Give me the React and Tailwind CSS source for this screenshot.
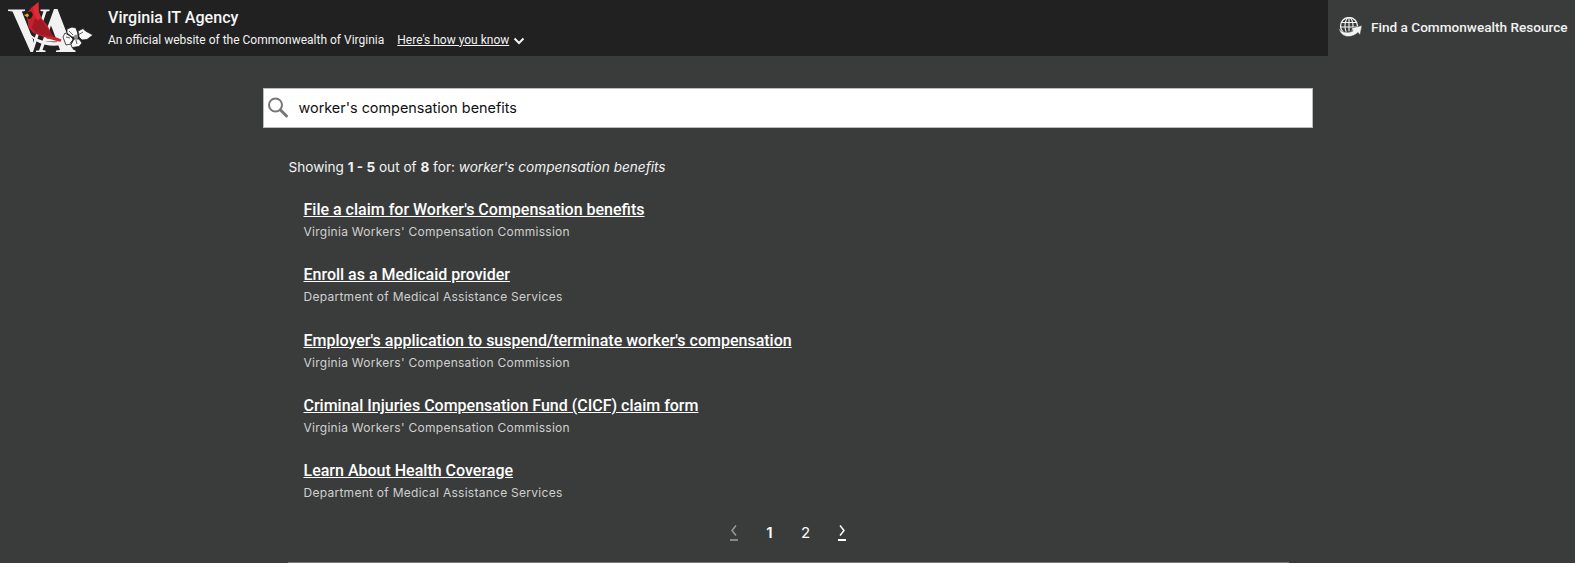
const results = [
  ["File a claim for Worker's Compensation benefits", "Virginia Workers' Compensation Commission"],
  ["Enroll as a Medicaid provider", "Department of Medical Assistance Services"],
  ["Employer's application to suspend/terminate worker's compensation", "Virginia Workers' Compensation Commission"],
  ["Criminal Injuries Compensation Fund (CICF) claim form", "Virginia Workers' Compensation Commission"],
  ["Learn About Health Coverage", "Department of Medical Assistance Services"],
];

function Logo() {
  return (
    <svg width="96" height="56" viewBox="0 0 96 56" className="shrink-0">
      {/* V */}
      <path d="M8 9.500h17v1.400l-3.200.6L33 39.500 33 52h-2.500L12.500 11.500 8 10.900z" fill="#f2f2f2" />
      <path d="M32 46 43.500 11.500l-3-.6V9.500h9v1.400l-3 .6L33 52h-2z" fill="#f2f2f2" />
      {/* A */}
      <path d="M39 50.500 54 9h3.500L73 49.500l2.500 1V52H56v-1.500l4-.5-3-8.500H45.500l-3 8.500 3 .5V52H36v-1.500z" fill="#f2f2f2" />
      <path d="M46.500 38.500h9.500l-5-13z" fill="#212121" />
      {/* cardinal */}
      <path d="M38.500 2 31.500 7.500 28 12l-2 2.500 1.500 5.500 1 7.500 5 5.500 9 3.500 9 3 9 2.500 1-2.500-9-3.500-5-10.500-7-8.500-3-5z" fill="#c9202d" />
      <path d="M38 15l-4 6-2 7 4 5 10 3 8 1-6-8z" fill="#9f1a25" />
      <path d="M38.500 2 33 7l1 8 4 6 3-4-2-5z" fill="#dd2a35" />
      <path d="M27 12.500l4-1 2 3-2 4-3 .5z" fill="#1b1b1b" />
      <path d="M24 15l4-1.500 1 2.500-2 1z" fill="#e7a92b" />
      {/* swoosh */}
      <path d="M28 32c8 9 22 12 38 9l2 2.500C50 49 34 44 28 32z" fill="#f2f2f2" />
      {/* dogwood */}
      <g fill="#f8f8f8" stroke="#1d1d1d" strokeWidth="0.8" strokeLinejoin="round">
        <path d="M67 29l5-2 4 1 2 6-1 3-5 0-5-4z" />
        <path d="M78 31l5-2.500 2.500 2.500 7.500 4-6 4.500-5 .5-3-3z" />
        <path d="M74 39l5 0 3 4-3 3.500-7 1-1-3z" />
        <path d="M65 33l5 3 3 3-2 5-5 1-1.500-4-1.500-4z" />
      </g>
      <path d="M69 31l4 4M83 32l-5 3M70 43l3-3M77 44l-1-4M66 37l4 1" stroke="#1d1d1d" strokeWidth="0.7" />
      <circle cx="76" cy="37" r="2.200" fill="#8a8a8a" />
    </svg>
  );
}

function Globe() {
  return (
    <svg width="24" height="21" viewBox="0 0 24 21" className="shrink-0">
      <circle cx="11" cy="9" r="8.500" fill="none" stroke="#f2f2f2" strokeWidth="1.300" />
      <ellipse cx="11" cy="9" rx="4" ry="8.500" fill="none" stroke="#f2f2f2" strokeWidth="1.100" />
      <path d="M3 5.500h16M2.500 10h17M11 .5v14" stroke="#f2f2f2" strokeWidth="1.100" />
      <path d="M.5 11c3 4.500 9 5.500 14.500 3l-1.500-3L24 8.500 22 18l-2-2.500C13 22 3 21 .5 11z" fill="#f2f2f2" stroke="#3a3c3b" strokeWidth="0.500" />
    </svg>
  );
}

function Chevron({ left, color }) {
  return (
    <svg width="8" height="11" viewBox="0 0 8 11">
      <path d={left ? "M6 .5 2 5.500l4 5" : "M2 .5l4 5-4 5"} fill="none" stroke={color} strokeWidth="1.500" />
    </svg>
  );
}

export default function App() {
  return (
    <div className="h-[563px] overflow-hidden bg-[#3a3c3b] text-white font-['Inter',sans-serif]">
      <header className="flex h-14 bg-[#212121] font-['Roboto',sans-serif]">
        <div className="flex flex-1 items-center">
          <Logo />
          <div className="ml-3">
            <div className="pt-[1px] text-[16.1px] font-medium leading-5 text-[#f5f5f5]">Virginia IT Agency</div>
            <div className="mt-[2px] flex items-center text-xs leading-5 text-[#f2f2f2]">
              <span>An official website of the Commonwealth of Virginia</span>
              <a className="ml-[13px] underline">Here's how you know</a>
              <svg width="12" height="12" viewBox="0 0 12 12" className="ml-[4px] mt-[2px]">
                <path d="M1.500 3.500 6 8l4.500-4.500" fill="none" stroke="#f2f2f2" strokeWidth="2" />
              </svg>
            </div>
          </div>
        </div>
        <div className="flex w-[247px] items-center bg-[#3a3c3b] pb-[2px] pl-[10px]">
          <Globe />
          <span className="ml-[9px] whitespace-nowrap text-[13.6px] font-medium text-[#f2f2f2]">Find a Commonwealth Resource</span>
        </div>
      </header>
      <main className="mx-auto w-[1050px]">
        <div className="mt-8 flex h-10 items-center border border-[#bbb] bg-white pl-1">
          <svg width="24" height="24" viewBox="0 0 24 24" className="shrink-0">
            <circle cx="7.500" cy="9" r="6.500" fill="none" stroke="#777" strokeWidth="2" />
            <path d="M12.500 14 18.500 20" stroke="#777" strokeWidth="3" strokeLinecap="round" />
          </svg>
          <span className="ml-[7px] text-[14.4px] text-[#111]">worker's compensation benefits</span>
        </div>
        <p className="ml-[26px] mt-[29px] text-[13.6px] leading-5 text-[#f2f2f2]">
          Showing <b className="font-bold">1 - 5</b> out of <b className="font-bold">8</b> for: <i>worker's compensation benefits</i>
        </p>
        <ul className="ml-[41px] mt-[21px] font-['Roboto',sans-serif]">
          {results.map(([title, agency]) => (
            <li key={title} className="h-[65.25px]">
              <a className="block text-base font-medium leading-6 text-white underline">{title}</a>
              <div className="mt-[1px] font-['Inter',sans-serif] text-xs leading-[18px] tracking-[0.27px] text-[#d0d0d0]">{agency}</div>
            </li>
          ))}
        </ul>
        <nav className="mt-[-1px] flex justify-center text-[15px] leading-5">
          <span className="flex w-9 justify-center">
            <span className="h-[18px] w-2 border-b-2 border-[#888] pt-[2px]"><Chevron left color="#999" /></span>
          </span>
          <span className="w-9 text-center font-semibold">1</span>
          <span className="w-9 text-center">2</span>
          <span className="flex w-9 justify-center">
            <span className="h-[18px] w-2 border-b-2 border-white pt-[2px]"><Chevron color="#fff" /></span>
          </span>
        </nav>
        <div className="ml-[25px] mt-[19px] h-px w-[1001px] bg-[#777]" />
      </main>
    </div>
  );
}
